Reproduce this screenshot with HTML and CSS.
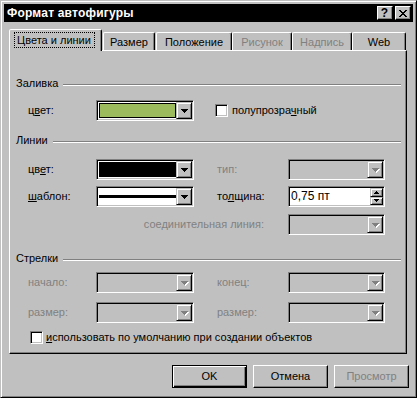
FILE: index.html
```html
<!DOCTYPE html>
<html lang="ru">
<head>
<meta charset="utf-8">
<title>Формат автофигуры</title>
<link rel="stylesheet" href="styles.css">
</head>
<body>
<div class="window">
  <div class="titlebar">
    <span class="title">Формат автофигуры</span>
    <div class="tbtns">
      <span class="tbtn q">?</span>
      <span class="tbtn"><svg width="8" height="7" viewBox="0 0 8 7" shape-rendering="crispEdges"><path d="M0 0h2v1H0zM6 0h2v1H6zM1 1h2v1H1zM5 1h2v1H5zM2 2h4v1H2zM3 3h2v1H3zM2 4h4v1H2zM1 5h2v1H1zM5 5h2v1H5zM0 6h2v1H0zM6 6h2v1H6z" fill="#000"/></svg></span>
    </div>
  </div>

  <div class="tabs">
    <div class="tab active"><span class="focus">Цвета и линии</span></div>
    <div class="tab t-size">Размер</div>
    <div class="tab t-pos">Положение</div>
    <div class="tab t-pic disabled">Рисунок</div>
    <div class="tab t-cap disabled">Надпись</div>
    <div class="tab t-web">Web</div>
  </div>

  <div class="panel">
    <div class="group g-fill"><span>Заливка</span><i class="rule"></i></div>

    <div class="row r-fill">
      <span class="lbl">ц<u>в</u>ет:</span>
      <div class="combo wide">
        <span class="field"><span class="swatch green"></span></span>
        <span class="drop"><svg width="7" height="4" shape-rendering="crispEdges"><path d="M0 0h7v1H0zM1 1h5v1H1zM2 2h3v1H2zM3 3h1v1H3z" fill="#000"/></svg></span>
      </div>
      <span class="spacer"></span>
      <label class="check c-semi"><span class="box"></span><span>полупрозра<u>ч</u>ный</span></label>
    </div>

    <div class="group g-lines"><span>Линии</span><i class="rule"></i></div>

    <div class="row r-l1">
      <span class="lbl">цв<u>е</u>т:</span>
      <div class="combo wide">
        <span class="field"><span class="swatch black"></span></span>
        <span class="drop"><svg width="7" height="4" shape-rendering="crispEdges"><path d="M0 0h7v1H0zM1 1h5v1H1zM2 2h3v1H2zM3 3h1v1H3z" fill="#000"/></svg></span>
      </div>
      <span class="spacer"></span>
      <span class="lbl dis">тип:</span>
      <div class="combo off">
        <span class="field"></span>
        <span class="drop"><svg width="8" height="5" shape-rendering="crispEdges"><path d="M1 1h7v1H1zM2 2h5v1H2zM3 3h3v1H3zM4 4h1v1H4z" fill="#fff"/><path d="M0 0h7v1H0zM1 1h5v1H1zM2 2h3v1H2zM3 3h1v1H3z" fill="#808080"/></svg></span>
      </div>
    </div>

    <div class="row r-l2">
      <span class="lbl"><u>ш</u>аблон:</span>
      <div class="combo wide">
        <span class="field"><span class="pattern"></span></span>
        <span class="drop"><svg width="7" height="4" shape-rendering="crispEdges"><path d="M0 0h7v1H0zM1 1h5v1H1zM2 2h3v1H2zM3 3h1v1H3z" fill="#000"/></svg></span>
      </div>
      <span class="spacer"></span>
      <span class="lbl">то<u>л</u>щина:</span>
      <div class="spin">
        <span class="value">0,75 пт</span>
        <span class="spinbtns">
          <span class="sbtn"><svg width="5" height="3" shape-rendering="crispEdges"><path d="M2 0h1v1H2zM1 1h3v1H1zM0 2h5v1H0z" fill="#000"/></svg></span>
          <span class="sbtn"><svg width="5" height="3" shape-rendering="crispEdges"><path d="M0 0h5v1H0zM1 1h3v1H1zM2 2h1v1H2z" fill="#000"/></svg></span>
        </span>
      </div>
    </div>

    <div class="row r-l3">
      <span class="lbl dis conn">соединительная линия:</span>
      <div class="combo off">
        <span class="field"></span>
        <span class="drop"><svg width="8" height="5" shape-rendering="crispEdges"><path d="M1 1h7v1H1zM2 2h5v1H2zM3 3h3v1H3zM4 4h1v1H4z" fill="#fff"/><path d="M0 0h7v1H0zM1 1h5v1H1zM2 2h3v1H2zM3 3h1v1H3z" fill="#808080"/></svg></span>
      </div>
    </div>

    <div class="group g-arrows"><span>Стрелки</span><i class="rule"></i></div>

    <div class="row r-a1">
      <span class="lbl dis">начало:</span>
      <div class="combo wide off">
        <span class="field"></span>
        <span class="drop"><svg width="8" height="5" shape-rendering="crispEdges"><path d="M1 1h7v1H1zM2 2h5v1H2zM3 3h3v1H3zM4 4h1v1H4z" fill="#fff"/><path d="M0 0h7v1H0zM1 1h5v1H1zM2 2h3v1H2zM3 3h1v1H3z" fill="#808080"/></svg></span>
      </div>
      <span class="spacer"></span>
      <span class="lbl dis">конец:</span>
      <div class="combo off">
        <span class="field"></span>
        <span class="drop"><svg width="8" height="5" shape-rendering="crispEdges"><path d="M1 1h7v1H1zM2 2h5v1H2zM3 3h3v1H3zM4 4h1v1H4z" fill="#fff"/><path d="M0 0h7v1H0zM1 1h5v1H1zM2 2h3v1H2zM3 3h1v1H3z" fill="#808080"/></svg></span>
      </div>
    </div>

    <div class="row r-a2">
      <span class="lbl dis">размер:</span>
      <div class="combo wide off">
        <span class="field"></span>
        <span class="drop"><svg width="8" height="5" shape-rendering="crispEdges"><path d="M1 1h7v1H1zM2 2h5v1H2zM3 3h3v1H3zM4 4h1v1H4z" fill="#fff"/><path d="M0 0h7v1H0zM1 1h5v1H1zM2 2h3v1H2zM3 3h1v1H3z" fill="#808080"/></svg></span>
      </div>
      <span class="spacer"></span>
      <span class="lbl dis">размер:</span>
      <div class="combo off">
        <span class="field"></span>
        <span class="drop"><svg width="8" height="5" shape-rendering="crispEdges"><path d="M1 1h7v1H1zM2 2h5v1H2zM3 3h3v1H3zM4 4h1v1H4z" fill="#fff"/><path d="M0 0h7v1H0zM1 1h5v1H1zM2 2h3v1H2zM3 3h1v1H3z" fill="#808080"/></svg></span>
      </div>
    </div>

    <label class="check c-default"><span class="box"></span><span><u>и</u>спользовать по умолчанию при создании объектов</span></label>
  </div>

  <div class="buttons">
    <span class="btn default">OK</span>
    <span class="btn">Отмена</span>
    <span class="btn dis">Просмотр</span>
  </div>
</div>
</body>
</html>
```

FILE: styles.css
```css
* { box-sizing: border-box; }
html, body { margin: 0; padding: 0; background: #c0c0c0; }
body {
  font-family: "Liberation Sans", Arial, sans-serif;
  font-size: 11px;
  line-height: 13px;
  color: #000;
}
u { text-decoration: underline; text-underline-offset: 1px; }

.window {
  width: 417px;
  height: 398px;
  border: 1px solid;
  border-color: #c0c0c0 #000 #000 #c0c0c0;
  box-shadow: inset 1px 1px #fff, inset -1px -1px #808080;
  padding: 3px;
  display: flex;
  flex-direction: column;
  background: #c0c0c0;
}

.titlebar {
  height: 18px;
  flex: none;
  background: #000;
  color: #fff;
  display: flex;
  align-items: center;
  justify-content: space-between;
  padding: 0 2px 0 3px;
}
.title { font-weight: bold; font-size: 12px; line-height: 18px; letter-spacing: 0.2px; }
.tbtns { display: flex; gap: 2px; }
.tbtn {
  width: 16px;
  height: 14px;
  background: #c0c0c0;
  border: 1px solid;
  border-color: #fff #000 #000 #fff;
  box-shadow: inset -1px -1px #808080;
  display: flex;
  align-items: center;
  justify-content: center;
  color: #000;
}
.tbtn.q { font-weight: bold; font-size: 12px; line-height: 12px; padding-right: 1px; }

/* tabs */
.tabs {
  display: flex;
  align-items: flex-end;
  height: 21px;
  margin: 7px 0 0 5px;
  flex: none;
}
.tab {
  height: 18px;
  border: 1px solid;
  border-bottom: 0;
  border-color: #fff #000 transparent #fff;
  border-radius: 2px 2px 0 0;
  box-shadow: inset -1px 0 #808080;
  display: flex;
  align-items: center;
  justify-content: center;
  padding-top: 1px;
  white-space: nowrap;
}
.tab.disabled { color: #808080; }
.tab.active {
  width: 93px;
  height: 22px;
  margin-bottom: -1px;
  position: relative;
  z-index: 2;
  background: #c0c0c0;
  padding-top: 0;
  padding-bottom: 1px;
}
.focus {
  border: 1px dotted #000;
  padding: 0 3px 0 2px;
  line-height: 14px;
  margin-left: -2px;
}
.t-size { width: 52px; margin-left: 1px; }
.t-pos { width: 76px; margin-left: 1px; }
.t-pic { width: 60px; }
.t-cap { width: 60px; }
.t-web { width: 54px; }

/* panel */
.panel {
  flex: none;
  height: 304px;
  margin: 0 6px 0 5px;
  border: 1px solid;
  border-color: #fff #000 #000 #fff;
  box-shadow: inset -1px -1px #808080;
  padding: 0 5px 0 6px;
  display: flex;
  flex-direction: column;
}
.group {
  display: flex;
  align-items: center;
  gap: 5px;
  height: 13px;
}
.rule {
  flex: 1;
  height: 2px;
  margin-top: 2px;
  border-top: 1px solid #808080;
  border-bottom: 1px solid #fff;
}
.g-fill { margin-top: 26px; }
.g-lines { margin-top: 13px; }
.g-arrows { margin-top: 17px; }

.row {
  display: grid;
  grid-template-columns: 68px 98px 23px 71px 97px;
  align-items: center;
  margin-left: 12px;
  height: 21px;
}
.r-fill { margin-top: 10px; }
.r-l1 { margin-top: 12px; }
.r-l2 { margin-top: 6px; }
.r-l3 { margin-top: 7px; }
.r-a1 { margin-top: 7px; }
.r-a2 { margin-top: 9px; }

.lbl { white-space: nowrap; }
.lbl.dis { color: #808080; }
.conn { grid-column: 1 / 5; justify-self: end; padding-right: 24px; }

/* combo box */
.combo {
  height: 21px;
  border: 1px solid;
  border-color: #808080 #fff #fff #808080;
  box-shadow: inset 1px 1px #000, inset -1px -1px #c0c0c0;
  padding: 1px;
  display: flex;
  background: #fff;
}
.combo.off { background: #c0c0c0; }
.combo .field { flex: 1; display: flex; padding: 1px 0 1px 1px; }
.drop {
  width: 16px;
  flex: none;
  background: #c0c0c0;
  border: 1px solid;
  border-color: #c0c0c0 #000 #000 #c0c0c0;
  box-shadow: inset 1px 1px #fff, inset -1px -1px #808080;
  display: flex;
  align-items: center;
  justify-content: center;
}
.drop svg { display: block; margin-left: 0px; margin-top: 1px; }
.combo.off .drop svg { margin-left: 1px; margin-top: 2px; }

.swatch { flex: 1; border: 1px solid #000; }
.swatch.green { background: #9cbb5c; }
.swatch.black { background: #000; }
.pattern { flex: 1; align-self: center; height: 3px; background: #000; }

/* spin */
.spin {
  height: 21px;
  border: 1px solid;
  border-color: #808080 #fff #fff #808080;
  box-shadow: inset 1px 1px #000, inset -1px -1px #c0c0c0;
  padding: 1px;
  display: flex;
  background: #fff;
}
.spin .value { flex: 1; padding-left: 1px; line-height: 17px; font-size: 12px; }
.spinbtns { width: 13px; display: flex; flex-direction: column; }
.sbtn {
  flex: 1;
  background: #c0c0c0;
  border: 1px solid;
  border-color: #c0c0c0 #000 #000 #c0c0c0;
  box-shadow: inset 1px 1px #fff, inset -1px -1px #808080;
  display: flex;
  align-items: center;
  justify-content: center;
}
.sbtn svg { display: block; }

/* checkboxes */
.check { display: flex; align-items: center; white-space: nowrap; }
.box {
  width: 13px;
  height: 13px;
  flex: none;
  border: 1px solid;
  border-color: #808080 #fff #fff #808080;
  box-shadow: inset 1px 1px #000, inset -1px -1px #c0c0c0;
  background: #fff;
}
.c-semi { margin-left: -2px; gap: 4px; grid-column: 4 / 6; }
.c-default { margin: 8px 0 0 14px; gap: 3px; height: 13px; }

/* buttons */
.buttons {
  display: flex;
  justify-content: flex-end;
  gap: 6px;
  margin-top: 11px;
  padding-right: 4px;
  flex: none;
}
.btn {
  width: 75px;
  height: 23px;
  border: 1px solid;
  border-color: #fff #000 #000 #fff;
  box-shadow: inset -1px -1px #808080;
  display: flex;
  align-items: center;
  justify-content: center;
}
.btn.default {
  border-color: #000;
  box-shadow: inset 1px 1px #fff, inset -1px -1px #000, inset -2px -2px #808080;
}
.btn.dis { color: #808080; }
```
